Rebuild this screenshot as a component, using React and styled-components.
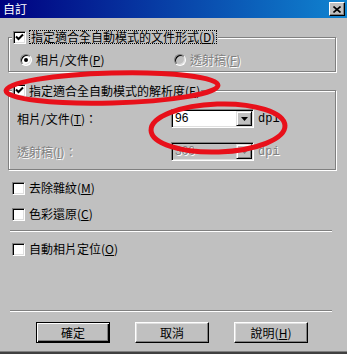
import React from "react";
import styled, { createGlobalStyle, css } from "styled-components";

const GlobalStyle = createGlobalStyle`
  html, body {
    margin: 0;
    padding: 0;
    background: #c0c0c0;
  }
  body {
    font-family: "Noto Sans CJK TC", "Liberation Sans", sans-serif;
    font-size: 12px;
    color: #000;
  }
`;

const Window = styled.div`
  position: relative;
  width: 347px;
  height: 354px;
  box-sizing: border-box;
  background: #c0c0c0;
  box-shadow: inset 0 -2px #404040, inset 0 -3px #808080;
  overflow: hidden;
`;

const TitleBar = styled.div`
  height: 18px;
  display: flex;
  align-items: center;
  justify-content: space-between;
  padding: 0 2px 0 3px;
  background: linear-gradient(to right, #000080, #1084d0);
  color: #fff;
  font-size: 12px;
  line-height: 18px;
`;

const CloseButton = styled.span`
  width: 16px;
  height: 14px;
  box-sizing: border-box;
  display: flex;
  align-items: center;
  justify-content: center;
  background: #c0c0c0;
  border: 1px solid;
  border-color: #fff #000 #000 #fff;
  box-shadow: inset -1px -1px #808080;
`;

const Body = styled.div`
  padding: 12px 11px 0 8px;
  display: flex;
  flex-direction: column;
`;

const Group = styled.fieldset`
  margin: ${({ $top }) => $top}px 0 0;
  padding: 0 0 ${({ $bottom }) => $bottom}px 0;
  border: 1px solid #808080;
  box-shadow: inset 1px 1px #fff, 1px 1px #fff;
  min-width: 0;
`;

const Legend = styled.legend`
  margin-left: 3px;
  padding: 0 1px;
  background: #c0c0c0;
  display: flex;
  align-items: center;
  gap: 3px;
  height: 14px;
`;

const FocusLabel = styled.span`
  border: 1px dotted #000;
  padding: 0 1px;
  line-height: 12px;
`;

const Key = styled.u`
  text-underline-offset: 1px;
`;

const RadioRow = styled.div`
  margin-top: 9px;
  padding-left: 11px;
  display: grid;
  grid-template-columns: 154px auto;
  height: 14px;
`;

const RadioItem = styled.label`
  display: flex;
  align-items: center;
  gap: 4px;
  line-height: 14px;
  ${({ $disabled }) => $disabled && disabledText}
`;

const disabledText = css`
  color: #808080;
  text-shadow: 1px 1px #fff;
`;

const RadioCircle = styled.span`
  width: 12px;
  height: 12px;
  box-sizing: border-box;
  border-radius: 50%;
  border: 1px solid;
  border-color: #808080 #fff #fff #808080;
  box-shadow: inset 1px 1px #000, inset -1px -1px #dfdfdf;
  background: ${({ $disabled }) => ($disabled ? "#c0c0c0" : "#fff")};
  display: flex;
  align-items: center;
  justify-content: center;
  flex: none;
`;

const Dot = styled.span`
  width: 4px;
  height: 4px;
  border-radius: 50%;
  background: #000;
`;

const FieldRow = styled.div`
  margin-top: ${({ $top }) => $top}px;
  padding-left: 8px;
  display: flex;
  align-items: center;
  height: 19px;
`;

const FieldLabel = styled.span`
  width: 154px;
  line-height: 14px;
  ${({ $disabled }) => $disabled && disabledText}
`;

const Combo = styled.div`
  width: 83px;
  height: 19px;
  box-sizing: border-box;
  display: flex;
  border: 1px solid;
  border-color: #808080 #fff #fff #808080;
  box-shadow: inset 1px 1px #000, inset -1px -1px #dfdfdf;
  background: ${({ $disabled }) => ($disabled ? "#c0c0c0" : "#fff")};
  padding: 1px;
`;

const ComboValue = styled.span`
  flex: 1;
  padding-left: 2px;
  line-height: 15px;
  font-family: "Liberation Sans", sans-serif;
  font-size: 12px;
  ${({ $disabled }) => $disabled && disabledText}
`;

const DropButton = styled.span`
  width: 16px;
  height: 15px;
  box-sizing: border-box;
  background: #c0c0c0;
  border: 1px solid;
  border-color: #dfdfdf #000 #000 #dfdfdf;
  box-shadow: inset 1px 1px #fff, inset -1px -1px #808080;
  display: flex;
  align-items: center;
  justify-content: center;
`;

const Unit = styled.span`
  margin-left: 4px;
  font-family: "Liberation Mono", monospace;
  font-size: 12px;
  ${({ $disabled }) => $disabled && disabledText}
`;

const CheckRow = styled.label`
  margin-top: ${({ $top }) => $top}px;
  padding-left: 4px;
  display: flex;
  align-items: center;
  gap: 4px;
  height: 14px;
  line-height: 14px;
`;

const Box = styled.span`
  width: 13px;
  height: 13px;
  box-sizing: border-box;
  flex: none;
  border: 1px solid;
  border-color: #808080 #fff #fff #808080;
  box-shadow: inset 1px 1px #000, inset -1px -1px #dfdfdf;
  background: #fff;
  display: flex;
  align-items: center;
  justify-content: center;
`;

const Separator = styled.div`
  margin: ${({ $top }) => $top}px 0 0 2px;
  width: 322px;
  height: 1px;
  background: #808080;
  border-bottom: 1px solid #fff;
`;

const ButtonRow = styled.div`
  margin-top: 10px;
  padding-left: 28px;
  display: flex;
  gap: 25px;
`;

const Button = styled.button`
  width: 74px;
  height: 21px;
  padding: 0;
  font: inherit;
  color: #000;
  background: #c0c0c0;
  border: 1px solid;
  border-color: #fff #000 #000 #fff;
  box-shadow: inset -1px -1px #808080, inset 1px 1px #dfdfdf;
  ${({ $default }) =>
    $default &&
    css`
      border-color: #000;
      box-shadow: inset 1px 1px #fff, inset -1px -1px #000,
        inset -2px -2px #808080;
    `}
`;

const Marks = styled.svg`
  position: absolute;
  left: 0;
  top: 0;
  pointer-events: none;
`;

const Check = () => (
  <svg width="9" height="9" viewBox="0 0 9 9">
    <path d="M1 3.5 L3.5 6 L8 1.5" fill="none" stroke="#000" strokeWidth="2" />
  </svg>
);

const Arrow = ({ color = "#000" }) => (
  <svg width="7" height="4" viewBox="0 0 7 4">
    <path d="M0 0 H7 L3.5 4 Z" fill={color} />
  </svg>
);

const CheckBox = ({ checked, top, children }) => (
  <CheckRow $top={top}>
    <Box>{checked && <Check />}</Box>
    <span>{children}</span>
  </CheckRow>
);

const Radio = ({ checked, disabled, children }) => (
  <RadioItem $disabled={disabled}>
    <RadioCircle $disabled={disabled}>{checked && <Dot />}</RadioCircle>
    <span>{children}</span>
  </RadioItem>
);

const ComboBox = ({ value, disabled }) => (
  <Combo $disabled={disabled}>
    <ComboValue $disabled={disabled}>{value}</ComboValue>
    <DropButton>
      <Arrow color={disabled ? "#808080" : "#000"} />
    </DropButton>
  </Combo>
);

const App = () => {
  return (
    <>
      <GlobalStyle />
      <Window>
        <TitleBar>
          <span>自訂</span>
          <CloseButton>
            <svg width="8" height="7" viewBox="0 0 8 7">
              <path d="M0.5 0.5 L7.5 6.5 M7.5 0.5 L0.5 6.5" stroke="#000" strokeWidth="1.6" />
            </svg>
          </CloseButton>
        </TitleBar>
        <Body>
          <Group $top={0} $bottom={4}>
            <Legend>
              <Box><Check /></Box>
              <FocusLabel>指定適合全自動模式的文件形式(<Key>D</Key>)</FocusLabel>
            </Legend>
            <RadioRow>
              <Radio checked>相片/文件(<Key>P</Key>)</Radio>
              <Radio disabled>透射稿(<Key>F</Key>)</Radio>
            </RadioRow>
          </Group>

          <Group $top={11} $bottom={8}>
            <Legend>
              <Box><Check /></Box>
              <span>指定適合全自動模式的解析度(<Key>E</Key>)</span>
            </Legend>
            <FieldRow $top={12}>
              <FieldLabel>相片/文件(<Key>T</Key>)：</FieldLabel>
              <ComboBox value="96" />
              <Unit>dpi</Unit>
            </FieldRow>
            <FieldRow $top={14}>
              <FieldLabel $disabled>透射稿(<Key>I</Key>)：</FieldLabel>
              <ComboBox value="300" disabled />
              <Unit $disabled>dpi</Unit>
            </FieldRow>
          </Group>

          <CheckBox top={11}>去除雜紋(<Key>M</Key>)</CheckBox>
          <CheckBox top={12}>色彩還原(<Key>C</Key>)</CheckBox>
          <Separator $top={9} />
          <CheckBox top={10}>自動相片定位(<Key>O</Key>)</CheckBox>
          <Separator $top={54} />

          <ButtonRow>
            <Button $default>確定</Button>
            <Button>取消</Button>
            <Button>說明(<Key>H</Key>)</Button>
          </ButtonRow>
        </Body>

        <Marks width="347" height="354" viewBox="0 0 347 354">
          <ellipse cx="112" cy="88" rx="106" ry="15" fill="none" stroke="#e8101a" strokeWidth="5" transform="rotate(-1.5 112 88)" />
          <ellipse cx="218" cy="128" rx="67" ry="24" fill="none" stroke="#e8101a" strokeWidth="5" transform="rotate(-2 218 128)" />
        </Marks>
      </Window>
    </>
  );
};

export default App;
